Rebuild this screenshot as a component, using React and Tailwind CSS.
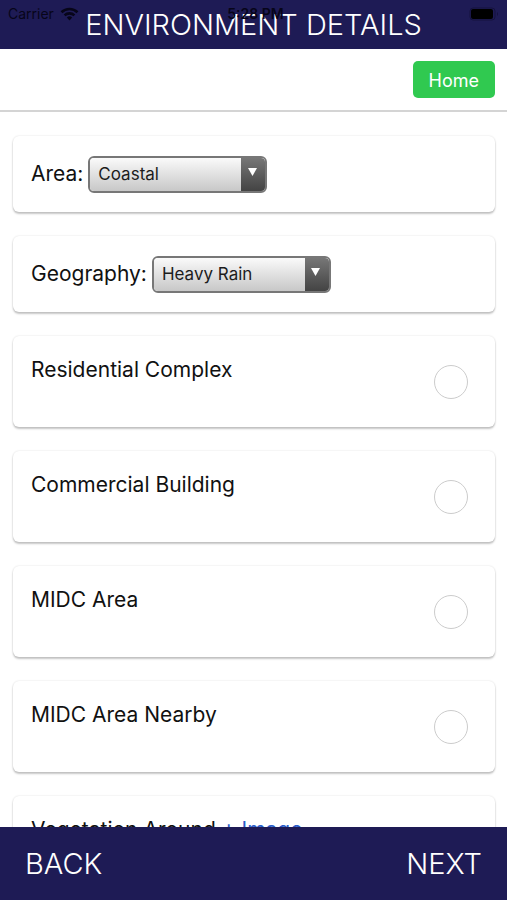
import { useId } from "react";

function Card({ children, className = "" }) {
  return (
    <section
      className={`rounded-md bg-white px-[18px] shadow-[0_2px_2px_rgba(0,0,0,0.22),0_0_2px_rgba(0,0,0,0.14)] ${className}`}
    >
      {children}
    </section>
  );
}

function SelectCard({ label, options }) {
  const id = useId();
  return (
    <Card className="flex h-[76px] shrink-0 items-center gap-[5px]">
      <label htmlFor={id} className="text-[21px] leading-8">
        {label}
      </label>
      <div className="relative flex h-[37px] w-[179px] overflow-hidden rounded-md border-2 border-[#777777]">
        <select
          id={id}
          className="w-full appearance-none bg-linear-to-b from-[#fafafa] to-[#c8c8c8] pt-0.5 pr-7 pl-2 text-[17px] text-[#1c1c1c] outline-none"
        >
          {options.map((option) => (
            <option key={option}>{option}</option>
          ))}
        </select>
        <span className="pointer-events-none absolute inset-y-0 right-0 flex w-6 items-center justify-center bg-linear-to-b from-[#777777] to-[#444444]">
          <svg width="9" height="8" viewBox="0 0 9 8" className="mr-0.5 mb-1 fill-white">
            <path d="M0 0h9L4.5 8z" />
          </svg>
        </span>
      </div>
    </Card>
  );
}

function CheckCard({ label }) {
  const id = useId();
  return (
    <Card className="flex h-[91px] shrink-0 items-start justify-between pt-[18px] pr-[27px]">
      <label htmlFor={id} className="text-[21px] leading-8">
        {label}
      </label>
      <input
        id={id}
        type="checkbox"
        className="mt-[11px] size-[34px] appearance-none rounded-full border border-[#cccccc] bg-white checked:bg-[#30c950]"
      />
    </Card>
  );
}

function ImageCard({ label, link }) {
  return (
    <Card className="flex h-[137px] shrink-0 items-start gap-1.5 pt-[18px] text-[21px] leading-8">
      <span>{label}</span>
      <a href="#image" className="text-[#2a5cc8]">
        {link}
      </a>
    </Card>
  );
}

function WifiIcon() {
  return (
    <svg width="19" height="14" viewBox="0 0 19 14" fill="none" stroke="currentColor" strokeWidth="2.6" aria-hidden="true">
      <path d="M1.5 5.2a11.5 11.5 0 0 1 16 0" />
      <path d="M4.6 8.4a7 7 0 0 1 9.8 0" />
      <path d="M6.8 10.5a4 4 0 0 1 5.4 0L9.5 13.4z" fill="currentColor" stroke="none" />
    </svg>
  );
}

export default function App() {
  return (
    <div className="flex h-screen flex-col overflow-hidden bg-white font-[Inter,sans-serif] text-[#111111]">
      <header className="relative flex h-[49px] shrink-0 justify-center bg-[#1e1b55]">
        <h1 className="text-[29px] leading-[49px] font-light whitespace-nowrap text-white">ENVIRONMENT DETAILS</h1>
        <div className="absolute inset-x-0 top-1 flex h-5 items-center justify-between px-2 text-sm leading-5 text-[#070519]">
          <span className="flex items-center gap-1.5">
            Carrier
            <WifiIcon />
          </span>
          <span className="absolute inset-x-0 pl-1 text-center font-semibold">5:28 PM</span>
          <svg width="30" height="14" viewBox="0 0 30 14" aria-label="Battery">
            <rect x="1" y="1" width="25" height="12" rx="3" fill="none" stroke="#15123e" />
            <rect x="2" y="2" width="22" height="10" rx="2" fill="#000000" />
            <path d="M28 5q2 2 0 4z" fill="#15123e" />
          </svg>
        </div>
      </header>
      <nav className="flex h-[63px] shrink-0 items-center justify-end border-b-2 border-[#d4d4d4] px-3">
        <button type="button" className="h-[37px] rounded-[5px] bg-[#30c950] px-4 pt-0.5 text-[18px] text-white">
          Home
        </button>
      </nav>
      <main className="flex min-h-0 flex-1 flex-col gap-6 overflow-y-auto pt-6 pr-3 pb-6 pl-[13px] [scrollbar-width:none]">
        <SelectCard label="Area:" options={["Coastal", "Inland"]} />
        <SelectCard label="Geography:" options={["Heavy Rain", "Dry"]} />
        <CheckCard label="Residential Complex" />
        <CheckCard label="Commercial Building" />
        <CheckCard label="MIDC Area" />
        <CheckCard label="MIDC Area Nearby" />
        <ImageCard label="Vegetation Around" link="+ Image" />
      </main>
      <footer className="flex h-[73px] shrink-0 items-center justify-between bg-[#1e1b55] px-[25px] text-[29px] font-light text-white">
        <button type="button">BACK</button>
        <button type="button">NEXT</button>
      </footer>
    </div>
  );
}
